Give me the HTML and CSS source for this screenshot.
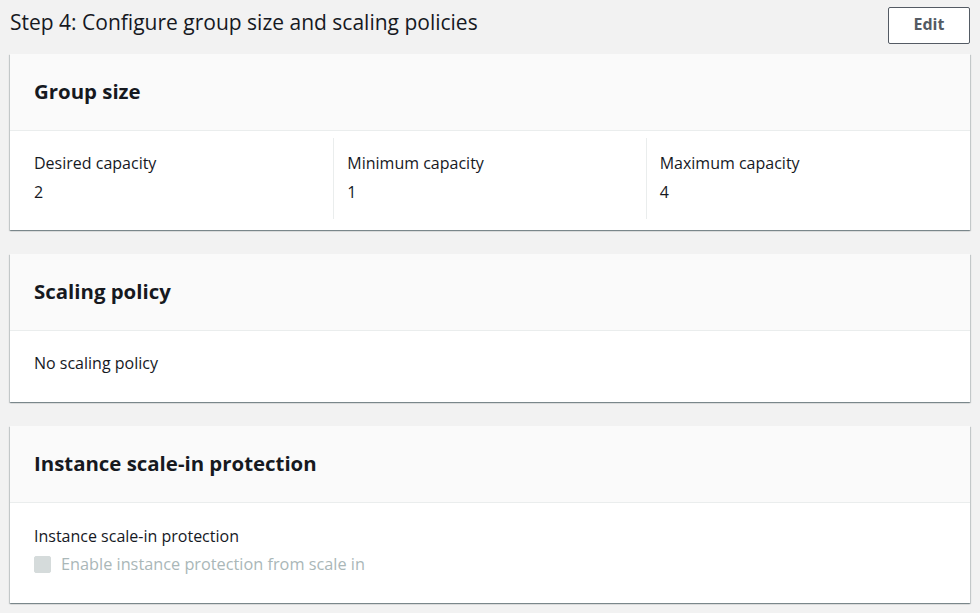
FILE: index.html
```html
<!DOCTYPE html>
<html>
<head>
<meta charset="utf-8">
<link rel="stylesheet" href="styles.css">
</head>
<body>
<div class="page">
  <div class="step-head">
    <h1 class="step-title">Step 4: Configure group size and scaling policies</h1>
    <button class="btn">Edit</button>
  </div>

  <section class="card">
    <div class="card-head"><h2 class="card-title">Group size</h2></div>
    <div class="card-body cols">
      <div class="col">
        <div class="label">Desired capacity</div>
        <div class="value">2</div>
      </div>
      <div class="col">
        <div class="label">Minimum capacity</div>
        <div class="value">1</div>
      </div>
      <div class="col">
        <div class="label">Maximum capacity</div>
        <div class="value">4</div>
      </div>
    </div>
  </section>

  <section class="card">
    <div class="card-head"><h2 class="card-title">Scaling policy</h2></div>
    <div class="card-body simple">
      <div class="text">No scaling policy</div>
    </div>
  </section>

  <section class="card">
    <div class="card-head"><h2 class="card-title">Instance scale-in protection</h2></div>
    <div class="card-body prot">
      <div class="text">Instance scale-in protection</div>
      <label class="check">
        <span class="box"></span>
        <span class="check-text">Enable instance protection from scale in</span>
      </label>
    </div>
  </section>
</div>
</body>
</html>
```

FILE: styles.css
```css
* { box-sizing: border-box; }
html, body {
  margin: 0;
  padding: 0;
  background: #f2f2f2;
  font-family: "Open Sans", "Noto Sans", sans-serif;
  color: #16191f;
}
.page {
  padding: 0 10px 0 10px;
}
.step-head {
  display: flex;
  justify-content: space-between;
  align-items: flex-start;
  height: 54px;
}
.step-title {
  margin: 0;
  padding-top: 8px;
  font-size: 21px;
  line-height: 28px;
  font-weight: 400;
}
.btn {
  margin-top: 7px;
  width: 82px;
  height: 37px;
  border: 1px solid #545b64;
  border-radius: 2px;
  background: #fff;
  color: #545b64;
  font-family: inherit;
  font-size: 16px;
  font-weight: 700;
  padding: 0 0 3px;
}
.card {
  background: #fff;
  box-shadow: 0 1px 1px 0 rgba(0,28,36,.3), 1px 1px 1px 0 rgba(0,28,36,.15), -1px 1px 1px 0 rgba(0,28,36,.15);
  margin-bottom: 24px;
}
.card-head {
  background: #fafafa;
  border-bottom: 1px solid #eaeded;
  height: 77px;
  padding: 0 24px 3px;
  display: flex;
  align-items: center;
}
.card-title {
  margin: 0;
  font-size: 20.4px;
  font-weight: 700;
  line-height: 24px;
}
.label, .text {
  font-size: 16px;
  line-height: 22px;
}
.value {
  font-size: 16px;
  line-height: 22px;
  margin-top: 7px;
}
.cols {
  display: grid;
  grid-template-columns: repeat(3, 1fr);
  padding: 7px 12px 11px 11px;
  height: 99px;
}
.col {
  padding: 14px 13px 0;
}
.col + .col {
  border-left: 1px solid #eaeded;
}
.simple {
  height: 71px;
  padding: 21px 24px 0;
}
.prot {
  height: 100px;
  padding: 22px 24px 0;
}
.check {
  display: flex;
  align-items: center;
  margin-top: 6px;
}
.box {
  width: 17px;
  height: 17px;
  background: #d5dbdb;
  border: 1px solid #d5dbdb;
  border-radius: 2px;
  margin-right: 10px;
}
.check-text {
  font-size: 16.3px;
  line-height: 22px;
  color: #aab7b8;
}
```
